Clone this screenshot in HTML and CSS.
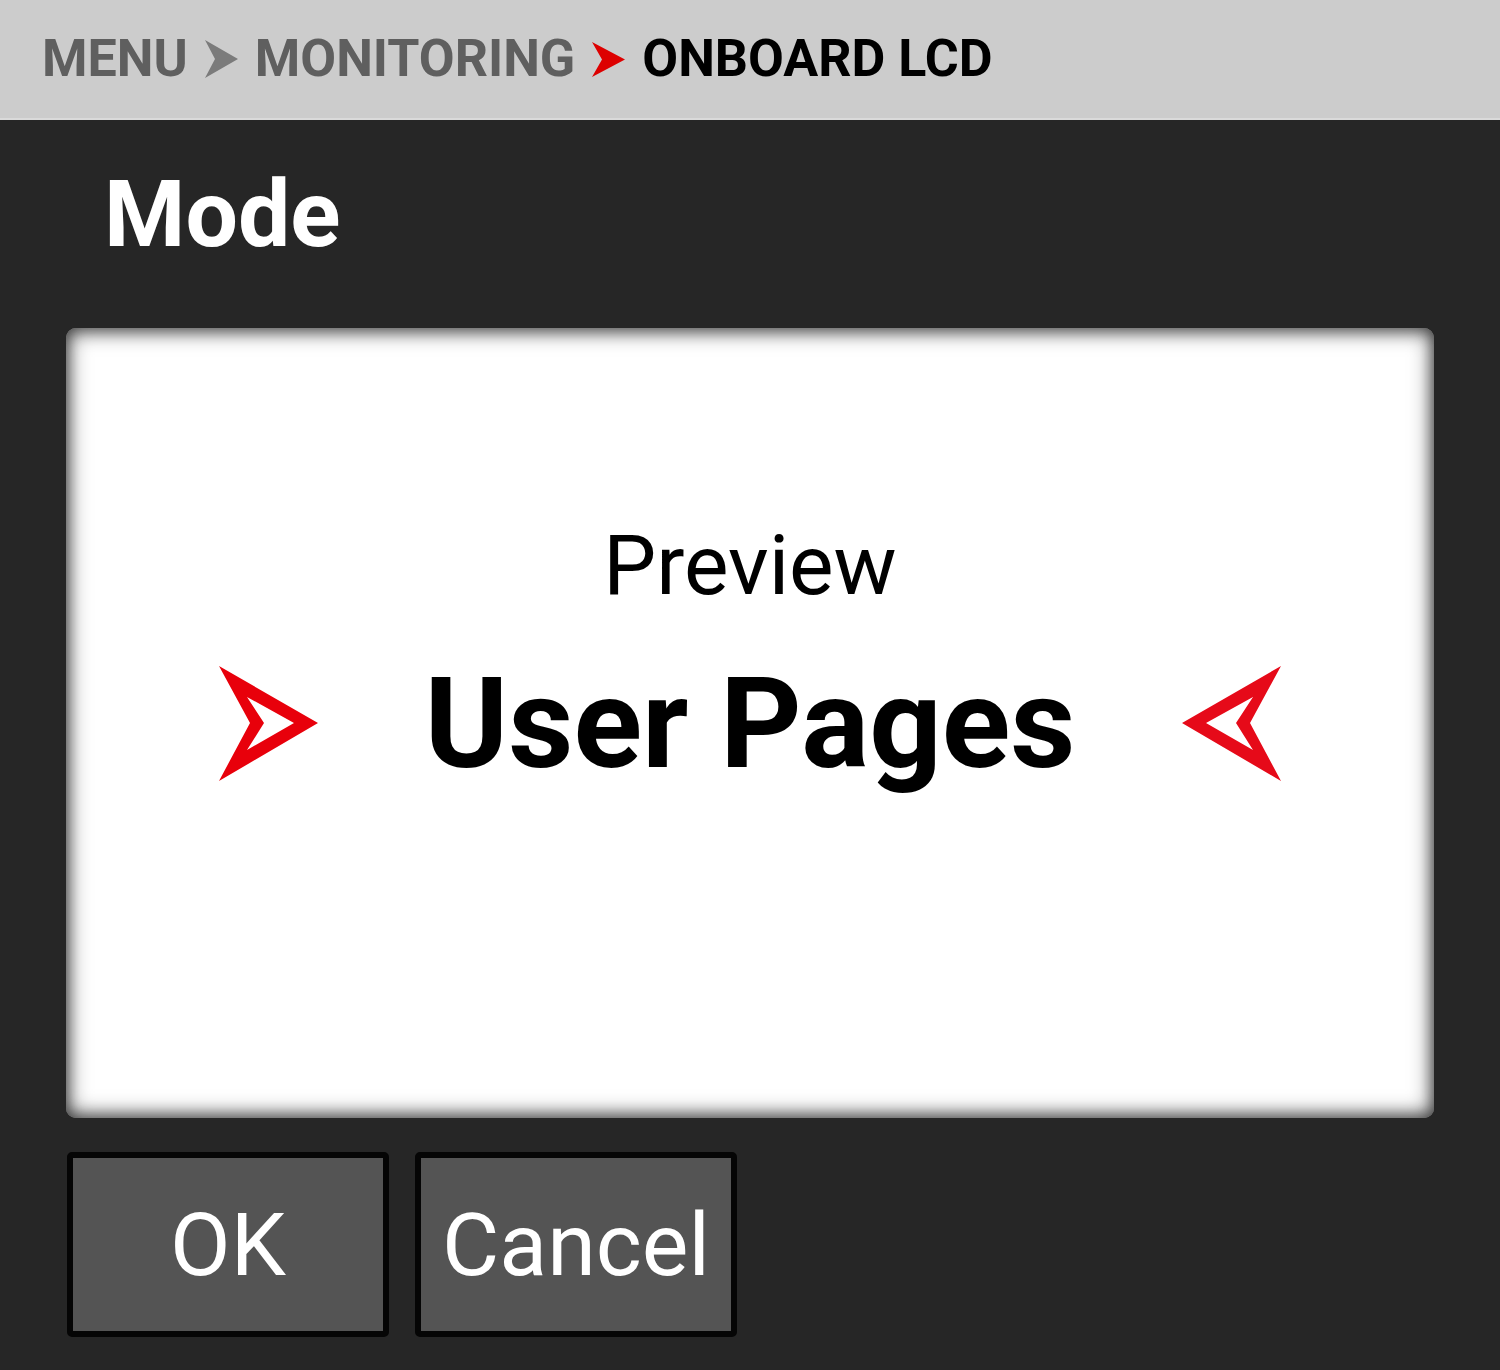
FILE: index.html
```html
<!DOCTYPE html>
<html lang="en">
<head>
<meta charset="utf-8">
<title>Onboard LCD</title>
<link rel="stylesheet" href="styles.css">
</head>
<body>
<header class="crumbs">
  <span class="crumb">MENU</span>
  <svg class="sep" viewBox="0 0 33 38" width="33" height="38"><path d="M0 0 L33 19 L0 38 L10 19 Z" fill="#7b7b7b"/></svg>
  <span class="crumb">MONITORING</span>
  <svg class="sep" viewBox="0 0 33 35" width="33" height="35"><path d="M0 0 L33 17.5 L0 35 L10 17.5 Z" fill="#dd0000"/></svg>
  <span class="crumb current">ONBOARD LCD</span>
</header>
<main class="main">
  <h1 class="title">Mode</h1>
  <section class="card">
    <div class="caption">Preview</div>
    <div class="picker">
      <svg class="arrow" viewBox="0 0 99 115" width="99" height="115"><path fill-rule="evenodd" fill="#e8000b" d="M0 0 L99 57 L0 115 L31 57 Z M28 31 L75 57 L28 84 L45 57 Z"/></svg>
      <div class="value">User Pages</div>
      <svg class="arrow" viewBox="0 0 99 115" width="99" height="115"><path fill-rule="evenodd" fill="#e60a19" d="M99 0 L0 57 L99 115 L68 57 Z M71 31 L24 57 L71 84 L54 57 Z"/></svg>
    </div>
  </section>
  <div class="buttons">
    <button class="btn">OK</button>
    <button class="btn">Cancel</button>
  </div>
</main>
</body>
</html>
```
FILE: styles.css
```css
html, body {
  margin: 0;
  padding: 0;
}
body {
  background: #262626;
  font-family: Roboto, "Liberation Sans", sans-serif;
  width: 1500px;
  height: 1370px;
  overflow: hidden;
}
.crumbs {
  height: 120px;
  box-sizing: border-box;
  background: #cccccc;
  border-bottom: 2px solid #dadada;
  display: flex;
  align-items: center;
  gap: 17px;
  padding: 0 0 0 42px;
}
.crumb {
  font-weight: 700;
  font-size: 52px;
  line-height: 1;
  color: #5f5f5f;
}
.crumb.current {
  color: #000;
}
.sep {
  display: block;
  flex: none;
}
.main {
  padding: 48px 66px 0;
}
.title {
  margin: 0 0 67px 38px;
  font-size: 93px;
  line-height: 93px;
  font-weight: 700;
  color: #fff;
}
.card {
  height: 790px;
  box-sizing: border-box;
  background: #fff;
  border-radius: 10px;
  box-shadow: inset 0 0 22px 2px rgba(0,0,0,0.6), inset 0 4px 14px rgba(0,0,0,0.3), inset 0 -4px 14px rgba(0,0,0,0.3);
  display: flex;
  flex-direction: column;
  align-items: center;
  padding-top: 196px;
}
.caption {
  font-size: 84px;
  line-height: 84px;
  color: #000;
}
.picker {
  margin-top: 52px;
  display: flex;
  align-items: center;
  gap: 106px;
}
.arrow {
  display: block;
  flex: none;
}
.value {
  font-size: 127px;
  line-height: 127px;
  font-weight: 700;
  color: #000;
}
.buttons {
  margin-top: 34px;
  display: flex;
  gap: 26px;
  padding-left: 1px;
}
.btn {
  width: 322px;
  height: 185px;
  box-sizing: border-box;
  background: #545454;
  border: 6px solid #050505;
  border-radius: 5px;
  color: #fff;
  font-family: Roboto, "Liberation Sans", sans-serif;
  font-size: 88px;
  padding: 0;
  display: flex;
  align-items: center;
  justify-content: center;
}
```
